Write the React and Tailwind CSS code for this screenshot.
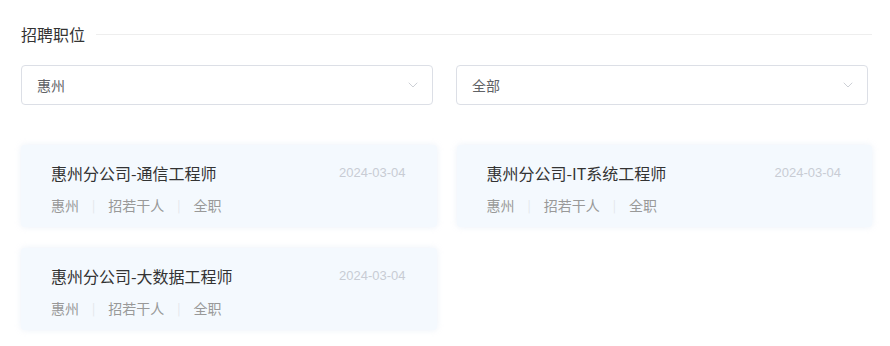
import { ChevronDown } from 'lucide-react'

const JOBS = [
  { title: '惠州分公司-通信工程师', date: '2024-03-04', city: '惠州', count: '招若干人', type: '全职' },
  { title: '惠州分公司-IT系统工程师', date: '2024-03-04', city: '惠州', count: '招若干人', type: '全职' },
  { title: '惠州分公司-大数据工程师', date: '2024-03-04', city: '惠州', count: '招若干人', type: '全职' },
]

const font = { fontFamily: '"Noto Sans CJK SC", "Liberation Sans", sans-serif' }

function Select({ value }) {
  return (
    <div className="h-10 flex items-center justify-between border border-[#dcdfe6] rounded pl-[15px] pr-[11px] bg-white">
      <span className="text-sm text-[#606266]">{value}</span>
      <ChevronDown size={16} strokeWidth={1.2} className="text-[#c0c4cc]" />
    </div>
  )
}

function JobCard({ job }) {
  return (
    <div className="bg-[#f4f9fe] rounded shadow-[0_0_6px_rgba(230,238,248,0.8)] pl-[30px] pr-[31px] pt-[16px] pb-[16px] h-[82px]">
      <div className="flex items-center justify-between">
        <span className="text-base text-[#333] leading-6">{job.title}</span>
        <span className="text-[13px] text-[#c8ccd4]" style={{ fontFamily: '"Liberation Sans", sans-serif' }}>{job.date}</span>
      </div>
      <div className="flex items-center text-sm text-[#999] mt-[10px] leading-5">
        <span>{job.city}</span>
        <span className="mx-[13px] text-[#e3e6ea] text-xs">|</span>
        <span>{job.count}</span>
        <span className="mx-[13px] text-[#e3e6ea] text-xs">|</span>
        <span>{job.type}</span>
      </div>
    </div>
  )
}

export default function App() {
  return (
    <div className="w-[890px] h-[346px] bg-white pl-[21px] pr-[18px] pt-[24px]" style={font}>
      <div className="flex items-center">
        <h2 className="text-base text-[#333] leading-5">招聘职位</h2>
        <div className="flex-1 h-px bg-[#eeeeee] ml-[11px]" />
      </div>

      <div className="grid grid-cols-2 gap-x-[23px] mt-[21px] pr-[4px]">
        <Select value="惠州" />
        <Select value="全部" />
      </div>

      <div className="grid grid-cols-2 gap-x-[20px] gap-y-[21px] mt-[40px]">
        {JOBS.map(job => (
          <JobCard key={job.title} job={job} />
        ))}
      </div>
    </div>
  )
}
